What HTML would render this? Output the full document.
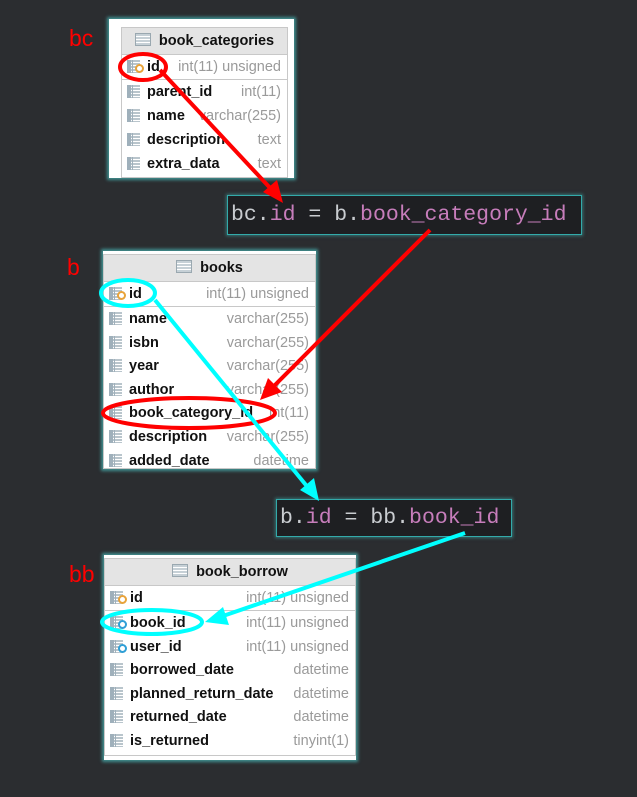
<!DOCTYPE html>
<html><head><style>
body{margin:0;width:637px;height:797px;background:#2b2d30;position:relative;overflow:hidden;font-family:"Liberation Sans",sans-serif}
.lab{position:absolute;color:#f00;font-size:23px}
.box{position:absolute;background:#fff;box-shadow:0 0 3px 2px rgba(70,170,170,.8)}
.tbl{position:absolute;border:1px solid #c8c8c8;background:#fff}
.hd{background:#e4e4e4;border-bottom:1px solid #c8c8c8;font-weight:bold;font-size:14.5px;text-align:center;color:#111}
.hd i{display:inline-block;width:14px;height:11px;border:1px solid #9aa8b0;background:repeating-linear-gradient(#c6d0d6 0 2px,#fff 2px 3px);vertical-align:-1px;margin-right:8px}
.r{position:relative;font-size:14.5px;color:#111}
.r b{position:absolute;left:25px}
.r span{position:absolute;right:6px;color:#9a9a9a}
.r i{position:absolute;left:5px;top:5px;width:13px;height:13px;background:linear-gradient(90deg,#9fb0bb 0 4px,transparent 4px 5px,#9fb0bb 5px 6px,transparent 6px),repeating-linear-gradient(#b9c5cc 0 2px,#fff 2px 3px);}
.r u{position:absolute;left:13px;top:9px;width:5px;height:5px;border-radius:50%;border:2px solid #e8a33a;background:#fff}
.r u.b{border-color:#2e9fd6}
.sep{border-top:1px solid #c8c8c8}
.expr{position:absolute;background:#1e1f22;border:1px solid #3aa;box-shadow:0 0 3px 1px rgba(60,160,160,.6);font-family:"Liberation Mono",monospace;font-size:21.5px;color:#c9ccd0;padding:0 0 0 3px;white-space:pre}
.p{color:#c77dbb}
</style></head><body>
<div class="lab" style="left:69px;top:25px">bc</div>
<div class="lab" style="left:67px;top:254px">b</div>
<div class="lab" style="left:69px;top:561px">bb</div>

<div class="box" style="left:109px;top:19px;width:185px;height:159px">
<div class="tbl" style="left:12px;top:8px;width:165px;height:149px">
<div class="hd" style="height:26px;line-height:26px"><i></i>book_categories</div>
<div class="r" style="height:24px;line-height:24px"><i></i><u></u><b>id</b><span>int(11) unsigned</span></div>
<div class="sep"></div>
<div class="r" style="height:24px;line-height:24px"><i></i><b>parent_id</b><span>int(11)</span></div>
<div class="r" style="height:24px;line-height:24px"><i></i><b>name</b><span>varchar(255)</span></div>
<div class="r" style="height:24px;line-height:24px"><i></i><b>description</b><span>text</span></div>
<div class="r" style="height:24px;line-height:24px"><i></i><b>extra_data</b><span>text</span></div>
</div></div>

<div class="box" style="left:103px;top:251px;width:213px;height:218px">
<div class="tbl" style="left:0;top:3px;width:211px;height:214px;border-top:none">
<div class="hd" style="height:26px;line-height:26px;border-top:1px solid #c8c8c8"><i></i>books</div>
<div class="r" style="height:24px;line-height:24px"><i></i><u></u><b>id</b><span>int(11) unsigned</span></div>
<div class="sep"></div>
<div class="r" style="height:23.6px;line-height:24px"><i></i><b>name</b><span>varchar(255)</span></div>
<div class="r" style="height:23.6px;line-height:24px"><i></i><b>isbn</b><span>varchar(255)</span></div>
<div class="r" style="height:23.6px;line-height:24px"><i></i><b>year</b><span>varchar(255)</span></div>
<div class="r" style="height:23.6px;line-height:24px"><i></i><b>author</b><span>varchar(255)</span></div>
<div class="r" style="height:23.6px;line-height:24px"><i></i><b>book_category_id</b><span>int(11)</span></div>
<div class="r" style="height:23.6px;line-height:24px"><i></i><b>description</b><span>varchar(255)</span></div>
<div class="r" style="height:23.6px;line-height:24px"><i></i><b>added_date</b><span>datetime</span></div>
</div></div>

<div class="box" style="left:104px;top:555px;width:252px;height:205px">
<div class="tbl" style="left:0;top:3px;width:250px;height:196px">
<div class="hd" style="height:26px;line-height:26px"><i></i>book_borrow</div>
<div class="r" style="height:24px;line-height:24px"><i></i><u></u><b>id</b><span>int(11) unsigned</span></div>
<div class="sep"></div>
<div class="r" style="height:23.6px;line-height:24px"><i></i><u class="b"></u><b>book_id</b><span>int(11) unsigned</span></div>
<div class="r" style="height:23.6px;line-height:24px"><i></i><u class="b"></u><b>user_id</b><span>int(11) unsigned</span></div>
<div class="r" style="height:23.6px;line-height:24px"><i></i><b>borrowed_date</b><span>datetime</span></div>
<div class="r" style="height:23.6px;line-height:24px"><i></i><b>planned_return_date</b><span>datetime</span></div>
<div class="r" style="height:23.6px;line-height:24px"><i></i><b>returned_date</b><span>datetime</span></div>
<div class="r" style="height:23.6px;line-height:24px"><i></i><b>is_returned</b><span>tinyint(1)</span></div>
</div></div>

<div class="expr" style="left:227px;top:195px;width:350px;height:38px;line-height:38px">bc.<span class="p">id</span> = b.<span class="p">book_category_id</span></div>
<div class="expr" style="left:276px;top:499px;width:231px;height:36px;line-height:36px">b.<span class="p">id</span> = bb.<span class="p">book_id</span></div>

<svg width="637" height="797" style="position:absolute;left:0;top:0" fill="none">
<g stroke="#f00" stroke-width="4">
<ellipse cx="143" cy="67" rx="23" ry="13"/>
<ellipse cx="189" cy="413" rx="86" ry="15"/>
<line x1="160" y1="70" x2="272" y2="190"/>
<line x1="430" y1="230" x2="272" y2="388"/>
</g>
<polygon fill="#f00" points="283,203 263,192 277,180"/>
<polygon fill="#f00" points="260,400 268,378 282,392"/>
<g stroke="#0ff" stroke-width="4">
<ellipse cx="128" cy="293" rx="27" ry="13"/>
<ellipse cx="152" cy="622" rx="50" ry="12"/>
<line x1="155" y1="300" x2="310" y2="490"/>
<line x1="465" y1="533" x2="220" y2="617"/>
</g>
<polygon fill="#0ff" points="319,501 300,490 314,478"/>
<polygon fill="#0ff" points="205,622 223,607 229,625"/>
</svg>
</body></html>
